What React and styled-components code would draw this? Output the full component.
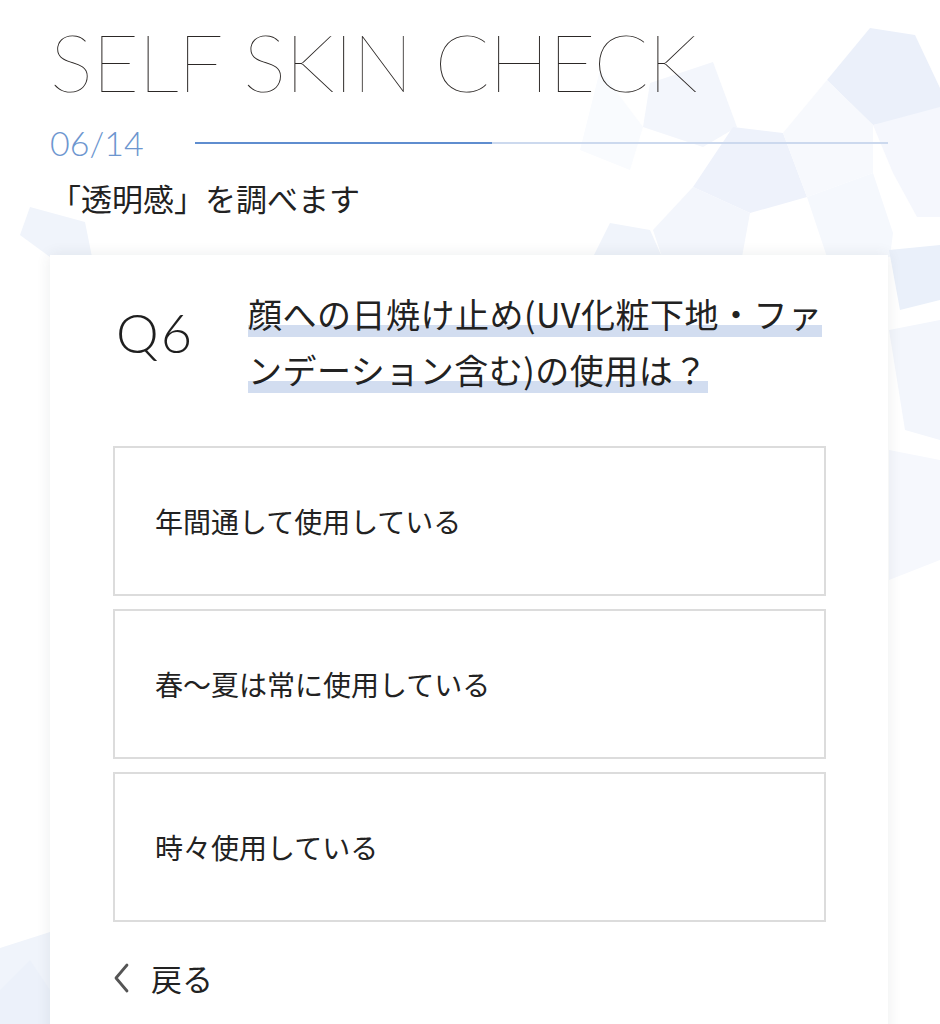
import React from "react";
import styled, { createGlobalStyle } from "styled-components";

const GlobalStyle = createGlobalStyle`
  html, body { margin: 0; padding: 0; background: #ffffff; }
  body { font-family: "Noto Sans CJK JP", "Noto Sans", sans-serif; color: #222; }
  * { box-sizing: border-box; }
`;

const Page = styled.div`
  position: relative;
  width: 940px;
  height: 1024px;
  overflow: hidden;
  background: #ffffff;
`;

const Backdrop = styled.svg`
  position: absolute;
  inset: 0;
  width: 100%;
  height: 100%;
  z-index: 0;
`;

const Content = styled.div`
  position: relative;
  z-index: 1;
  padding: 20px 52px 0 50px;
  display: flex;
  flex-direction: column;
`;

const Title = styled.h1`
  margin: 0;
  font-family: "Lato", sans-serif;
  font-weight: 200;
  font-size: 81px;
  line-height: 81px;
  color: #2c2826;
  letter-spacing: -0.9px;
  white-space: nowrap;
`;

const ProgressRow = styled.div`
  display: flex;
  align-items: center;
  margin-top: 22px;
`;

const Counter = styled.span`
  width: 145px;
  flex: none;
  font-family: "Lato", sans-serif;
  font-weight: 300;
  font-size: 34px;
  line-height: 40px;
  color: #6d96cf;
`;

const Track = styled.div`
  flex: 1;
  height: 2px;
  background: #ccd9ee;
  display: flex;
`;

const Fill = styled.div`
  height: 100%;
  background: #5f8dcf;
`;

const Lead = styled.p`
  margin: 15px 0 0;
  font-size: 31px;
  line-height: 40px;
  color: #222;
  font-weight: 400;
`;

const Card = styled.section`
  margin-top: 37px;
  background: #ffffff;
  box-shadow: 0 0 14px rgba(40, 50, 70, 0.09);
  padding: 31px 62px 60px 63px;
  display: flex;
  flex-direction: column;
`;

const QuestionRow = styled.div`
  display: flex;
  align-items: flex-start;
`;

const QLabel = styled.div`
  width: 135px;
  flex: none;
  padding-left: 3px;
  margin-top: 17px;
  font-family: "Lato", sans-serif;
  font-weight: 300;
  font-size: 54px;
  line-height: 60px;
  letter-spacing: 2px;
  color: #1f1f1f;
`;

const QuestionText = styled.h2`
  margin: 0;
  flex: 1;
  font-size: 34px;
  line-height: 56px;
  letter-spacing: 0.5px;
  font-weight: 400;
  color: #222;
`;

const Marker = styled.span`
  background: linear-gradient(
    transparent 73%,
    #d2ddf0 73%,
    #d2ddf0 97%,
    transparent 97%
  );
  -webkit-box-decoration-break: clone;
  box-decoration-break: clone;
`;

const OptionList = styled.div`
  margin-top: 48px;
  display: flex;
  flex-direction: column;
  gap: 13px;
`;

const Option = styled.button`
  height: 150px;
  width: 100%;
  display: flex;
  align-items: center;
  padding: 0 0 0 40px;
  background: #ffffff;
  border: 2px solid #dcdcdc;
  font-family: "Noto Sans CJK JP", "Noto Sans", sans-serif;
  font-size: 28px;
  color: #222;
  text-align: left;
  cursor: pointer;
`;

const BackLink = styled.a`
  margin-top: 36px;
  display: flex;
  align-items: center;
  gap: 20px;
  font-size: 31px;
  line-height: 40px;
  color: #222;
  text-decoration: none;
  cursor: pointer;
`;

const Chevron = () => (
  <svg width="18" height="30" viewBox="0 0 18 30" aria-hidden="true">
    <polyline
      points="14,2 3,15 14,28"
      fill="none"
      stroke="#555"
      strokeWidth="2.8"
      strokeLinecap="round"
      strokeLinejoin="round"
    />
  </svg>
);

const polygons = [
  { p: "827,80 870,28 915,35 940,88 940,112 873,125", c: "#ebf0fa" },
  { p: "643,127 650,83 713,62 737,127 703,147", c: "#f3f6fc" },
  { p: "733,127 783,133 807,197 750,213 693,187", c: "#eef2fb" },
  { p: "873,125 940,107 940,217 917,217 893,173", c: "#f5f7fd" },
  { p: "593,257 610,223 650,230 662,257", c: "#f0f4fb" },
  { p: "653,230 693,187 750,213 742,257 662,257", c: "#f3f6fc" },
  { p: "807,197 873,173 893,233 890,257 827,257", c: "#f5f8fd" },
  { p: "783,133 827,80 873,125 873,173 807,197", c: "#f7f9fd" },
  { p: "600,70 643,127 630,170 580,150", c: "#f9fbfe" },
  { p: "20,235 30,207 85,222 92,257 50,257", c: "#f0f4fb" },
  { p: "889,250 940,245 940,300 900,310", c: "#eaf0fa" },
  { p: "889,330 940,320 940,440 905,430", c: "#f3f6fc" },
  { p: "889,450 940,460 940,560 889,580", c: "#f6f8fd" },
  { p: "0,948 50,932 50,1024 0,1024", c: "#f0f4fb" },
  { p: "0,990 30,960 50,990 50,1024 0,1024", c: "#ecf1fa" },
];

const answers = [
  "年間通して使用している",
  "春〜夏は常に使用している",
  "時々使用している",
];

export default function App() {
  const current = 6;
  const total = 14;
  return (
    <>
      <GlobalStyle />
      <Page>
        <Backdrop viewBox="0 0 940 1024" preserveAspectRatio="none" aria-hidden="true">
          {polygons.map((poly, i) => (
            <polygon key={i} points={poly.p} fill={poly.c} />
          ))}
        </Backdrop>
        <Content>
          <Title>SELF SKIN CHECK</Title>
          <ProgressRow>
            <Counter>
              {String(current).padStart(2, "0")}/{total}
            </Counter>
            <Track>
              <Fill style={{ width: `${(current / total) * 100}%` }} />
            </Track>
          </ProgressRow>
          <Lead>「透明感」を調べます</Lead>
          <Card>
            <QuestionRow>
              <QLabel>Q{current}</QLabel>
              <QuestionText>
                <Marker>顔への日焼け止め(UV化粧下地・ファンデーション含む)の使用は？</Marker>
              </QuestionText>
            </QuestionRow>
            <OptionList>
              {answers.map((a) => (
                <Option key={a}>{a}</Option>
              ))}
            </OptionList>
            <BackLink>
              <Chevron />
              戻る
            </BackLink>
          </Card>
        </Content>
      </Page>
    </>
  );
}
